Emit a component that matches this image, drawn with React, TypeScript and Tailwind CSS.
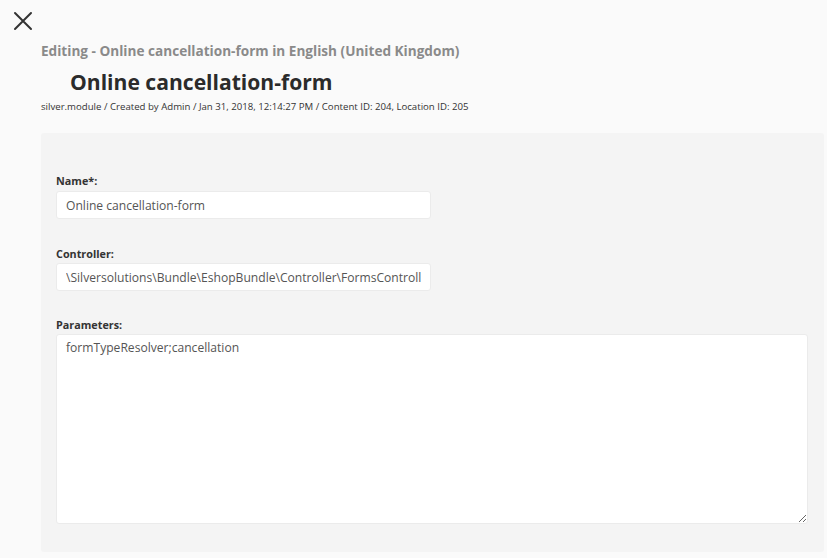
import React from "react";

export default function App() {
  const font = { fontFamily: '"Open Sans", "Noto Sans", sans-serif' };
  return (
    <div className="min-h-[558px] w-[827px] bg-[#fafafa] text-[#333]" style={font}>
      <div className="pl-[13px] pt-[11px] h-[41px]">
        <svg width="20" height="20" viewBox="0 0 20 20" fill="none">
          <path d="M2 2 L18 18 M18 2 L2 18" stroke="#333" strokeWidth="2" strokeLinecap="round" />
        </svg>
      </div>
      <div className="pl-[41px]">
        <div className="text-[13.6px] leading-[20px] font-bold text-[#8a8a8a]">
          Editing - Online cancellation-form in English (United Kingdom)
        </div>
        <div className="pl-[29px] mt-[6px] text-[21.1px] leading-[30px] font-bold text-[#2b2b2b]">
          Online cancellation-form
        </div>
        <div className="mt-[3px] text-[9.65px] leading-[14px] text-[#333]">
          silver.module / Created by Admin / Jan 31, 2018, 12:14:27 PM / Content ID: 204, Location ID: 205
        </div>
      </div>
      <div className="ml-[41px] mt-[19px] w-[783px] rounded-[3px] bg-[#f4f4f4] pl-[15px] pr-[16px] pt-[40px] pb-[28px]">
        <div className="text-[10.8px] leading-[16px] font-bold text-[#333]">Name*:</div>
        <input
          readOnly
          defaultValue="Online cancellation-form"
          className="mt-[2px] block h-[28px] w-[375px] rounded-[3px] border border-[#ebebeb] bg-white pl-[9px] text-[12.1px] text-[#555] outline-none"
          style={font}
        />
        <div className="mt-[27px] text-[10.8px] leading-[16px] font-bold text-[#333]">Controller:</div>
        <input
          readOnly
          defaultValue="\Silversolutions\Bundle\EshopBundle\Controller\FormsController"
          className="mt-[1px] block h-[28px] w-[375px] rounded-[3px] border border-[#ebebeb] bg-white pl-[9px] pr-[9px] text-[12.1px] text-[#555] outline-none"
          style={font}
        />
        <div className="mt-[26px] text-[10.8px] leading-[16px] font-bold text-[#333]">Parameters:</div>
        <textarea
          readOnly
          defaultValue="formTypeResolver;cancellation"
          className="mt-[1px] block h-[190px] w-[752px] rounded-[3px] border border-[#ebebeb] bg-white px-[9px] py-[4px] text-[12.1px] leading-[18px] text-[#555] outline-none"
          style={font}
        />
      </div>
    </div>
  );
}
